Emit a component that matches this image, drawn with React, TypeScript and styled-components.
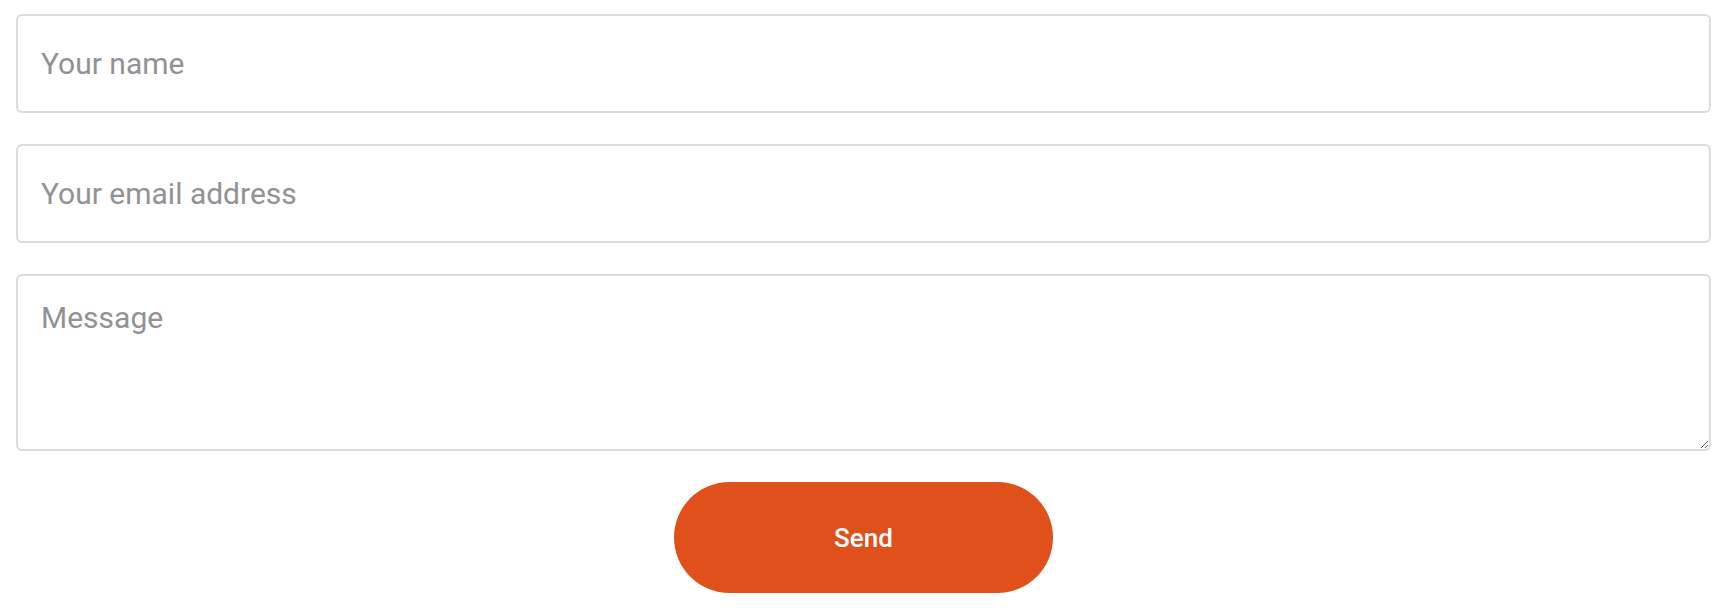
import React from "react";
import styled, { createGlobalStyle } from "styled-components";

const Global = createGlobalStyle`
  html, body { margin: 0; padding: 0; background: #ffffff; }
  body { font-family: Roboto, "Liberation Sans", Arial, sans-serif; }
  * { box-sizing: border-box; }
`;

const Form = styled.form`
  display: flex;
  flex-direction: column;
  gap: 31px;
  padding: 14px 17px 0 16px;
`;

const fieldBase = `
  width: 100%;
  border: 2px solid #dcdcdc;
  border-radius: 6px;
  background: #ffffff;
  font-family: Roboto, "Liberation Sans", Arial, sans-serif;
  font-size: 30px;
  color: #333;
  padding: 0 23px;
  outline: none;
  &::placeholder { color: #929296; opacity: 1; }
`;

const Input = styled.input`
  ${fieldBase}
  height: 99px;
  display: block;
`;

const TextArea = styled.textarea`
  ${fieldBase}
  height: 177px;
  display: block;
  padding-top: 24px;
  line-height: 1.2;
  resize: vertical;
`;

const ButtonRow = styled.div`
  display: flex;
  justify-content: center;
`;

const SendButton = styled.button`
  width: 379px;
  height: 111px;
  border: none;
  border-radius: 56px;
  background: #e0501b;
  color: #ffffff;
  font-family: Roboto, "Liberation Sans", Arial, sans-serif;
  font-size: 26px;
  font-weight: 500;
  cursor: pointer;
`;

export default function App() {
  return (
    <>
      <Global />
      <Form onSubmit={(e) => e.preventDefault()}>
        <Input type="text" placeholder="Your name" />
        <Input type="email" placeholder="Your email address" />
        <TextArea placeholder="Message" />
        <ButtonRow>
          <SendButton type="submit">Send</SendButton>
        </ButtonRow>
      </Form>
    </>
  );
}
